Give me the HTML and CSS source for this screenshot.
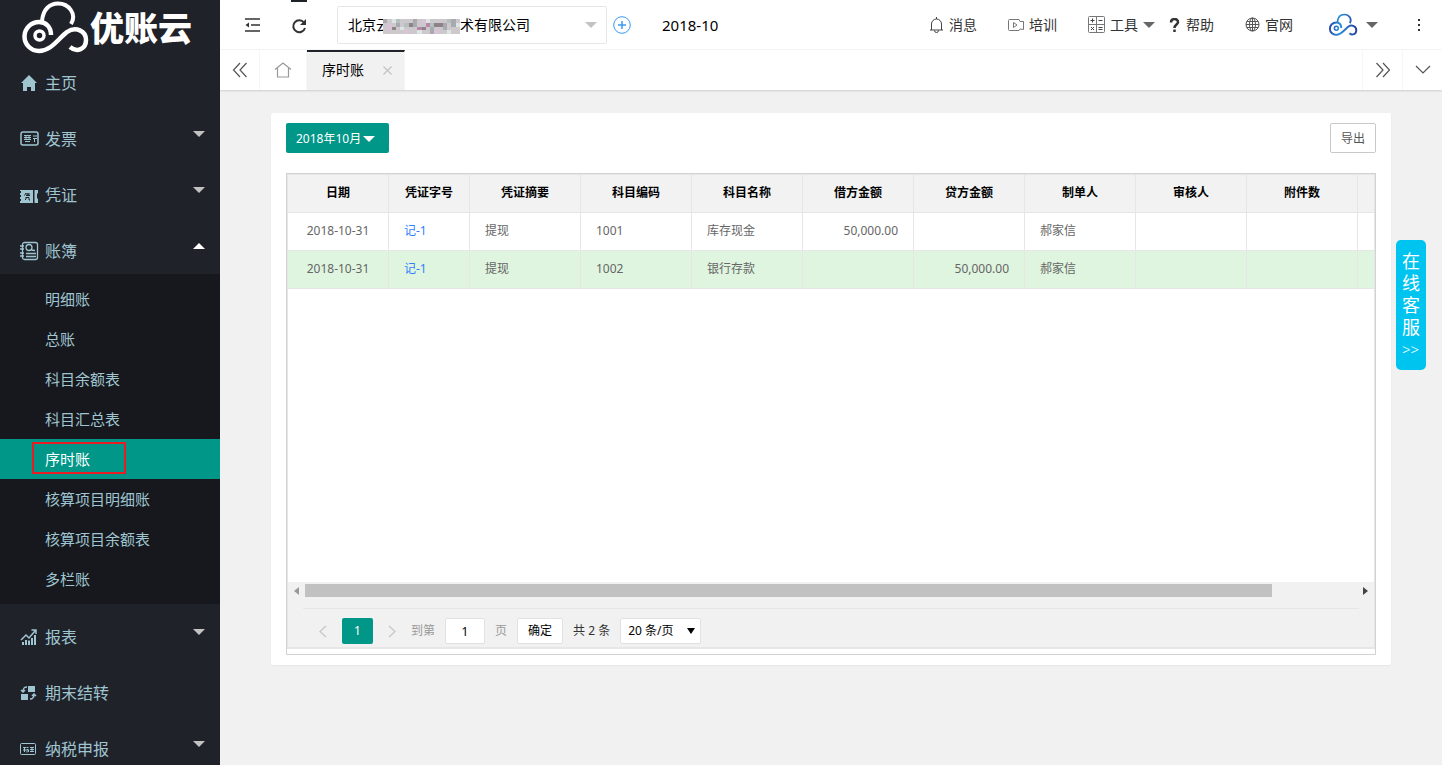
FILE: index.html
```
<!DOCTYPE html>
<html lang="zh-CN">
<head>
    <meta charset="UTF-8">
    <meta name="viewport" content="width=device-width, initial-scale=1.0">
    <title>优账云 - 序时账</title>
    <link rel="stylesheet" href="styles.css">
</head>
<body>

<svg class="symbols" aria-hidden="true">
    <symbol id="cloud" viewBox="20 0 70 56">
        <path d="M51 35C51 27 46 22 39 22A14.5 14.5 0 0 0 39 51C51 51 58 39 67 32C76 26 86 31 86 40C86 49 77 53 70 47" fill="none" stroke-width="4.5"/>
        <path d="M42 21C43 9 50 3.500 58 3.500C69 3.500 77 14 71 24" fill="none" stroke-width="4"/>
        <circle cx="39.5" cy="35.5" r="4.5" fill="none" stroke-width="3.5"/>
    </symbol>
</svg>

<aside class="sidebar">
    <a class="logo" href="#">
        <svg class="logo-mark" width="70" height="56"><use href="#cloud"/></svg>
        <span>优账云</span>
    </a>
    <ul class="menu">
        <li>
            <a href="#">
                <svg width="18" height="18" viewBox="0 0 18 18"><path d="M9 1L1 9h2v8h4v-4h4v4h4V9h2z" fill="currentColor"/></svg>
                主页
            </a>
        </li>
        <li>
            <a href="#">
                <svg width="20" height="18" viewBox="0 0 20 18" fill="none" stroke="currentColor"><rect x="1" y="2" width="17" height="13" rx="2" stroke-width="1.5"/><path d="M4 5.500h7M4 7.500h7M4 9.500h7M5 11.500h5M6 5v4M9 5v4M13 6h4M13 8.500h4M14.500 9v3"/></svg>
                发票
                <i class="caret"></i>
            </a>
        </li>
        <li>
            <a href="#">
                <svg width="20" height="18" viewBox="0 0 20 18"><path d="M0 4h13v13H0v-2h1v-2H0v-2h1V9H0V7h1V5H0zM14.500 4H18v3l-1 1v4l1 1v4h-3.500z" fill="currentColor"/><path d="M6 7L4.500 9.500M6 8h4M8 7v2.500M6 9.500h4M6 11v2l-1 1M6 11.500h3V14h1" stroke="#20222a" fill="none"/></svg>
                凭证
                <i class="caret"></i>
            </a>
        </li>
        <li>
            <a href="#">
                <svg width="20" height="20" viewBox="0 0 20 20" fill="none" stroke="currentColor" stroke-width="1.3"><rect x="2.5" y="1.5" width="15" height="17" rx="2"/><path d="M0 5h4M0 8h4M0 12h4M0 15h4M6 12.500h10M6 15.500h10M11 8.500c1 1 2 1 4 1"/><circle cx="9" cy="6.5" r="3"/></svg>
                账簿
                <i class="caret up"></i>
            </a>
            <ul class="submenu">
                <li><a href="#">明细账</a></li>
                <li><a href="#">总账</a></li>
                <li><a href="#">科目余额表</a></li>
                <li><a href="#">科目汇总表</a></li>
                <li class="active"><a href="#">序时账</a></li>
                <li><a href="#">核算项目明细账</a></li>
                <li><a href="#">核算项目余额表</a></li>
                <li><a href="#">多栏账</a></li>
            </ul>
        </li>
        <li>
            <a href="#">
                <svg width="18" height="18" viewBox="0 0 18 18" fill="currentColor"><path d="M2 14h2v3H2zM5 12h2v5H5zM8 12.500h2V17H8zM11 10h2v7h-2zM14 7h2v10h-2z"/><path d="M1 12l5-5 3 3 6-7M11.500 2H16v4" fill="none" stroke="currentColor" stroke-width="1.5"/></svg>
                报表
                <i class="caret"></i>
            </a>
        </li>
        <li>
            <a href="#">
                <svg width="18" height="18" viewBox="0 0 18 18" fill="currentColor"><path d="M8 2h7v6H8zM1 10h7v6H1z"/><path d="M7 3C4 3 3 4 3 8M1 6l2 2 2-2M10 15c3 0 4-1 4-5M12 12l2-2 2 2" fill="none" stroke="currentColor" stroke-width="1.5"/></svg>
                期末结转
            </a>
        </li>
        <li>
            <a href="#">
                <svg width="18" height="18" viewBox="0 0 18 18" fill="none" stroke="currentColor"><rect x="0.5" y="3.5" width="15" height="11" rx="1"/><path d="M3 7.500h3M4.500 7v5M3 10h3M6.500 7.500h2M6.500 9.500h2M7 10v2.500M8.500 10v2M10 7.500h4M10 9.500h4M10 11.500h4M12 7v4"/></svg>
                纳税申报
                <i class="caret"></i>
            </a>
        </li>
    </ul>
</aside>

<div class="main">
    <header class="header">
        <button class="icon-btn" aria-label="收起菜单">
            <svg width="16" height="14" viewBox="0 0 16 14" fill="none" stroke="#333" stroke-width="1.5"><path d="M0 1h15M6 7h9M0 13h15"/><path d="M4 4.500v5L.500 7z" fill="#333" stroke="none"/></svg>
        </button>
        <button class="icon-btn refresh" aria-label="刷新">
            <svg width="16" height="16" viewBox="0 0 16 16" fill="none" stroke="#333" stroke-width="2"><path d="M13 4.500A6 6 0 1 0 14 10"/><path d="M15 1v6H9z" fill="#333" stroke="none"/></svg>
        </button>
        <div class="company">
            <select aria-label="公司">
                <option>北京云　　　　　术有限公司</option>
            </select>
            <svg class="mosaic" width="77" height="15" viewBox="0 0 18 4" preserveAspectRatio="none" shape-rendering="crispEdges">
                <rect width="18" height="4" fill="#ccc8cc"/>
                <path d="M0 0h1v1H0zM3 1h1v1H3zM7 0h1v2H7zM11 2h1v2h-1zM14 1h1v2h-1zM16 0h1v2h-1z" fill="#a9a9b0"/>
                <path d="M1 1h1v2H1zM5 3h1v1H5zM9 0h1v1H9zM12 3h1v1h-1z" fill="#d9c3d6"/>
                <path d="M2 0h1v1H2zM4 2h1v1H4zM8 3h1v1H8zM10 0h1v1h-1zM15 3h1v1h-1zM17 1h1v1h-1z" fill="#d9e6e4"/>
                <path d="M2 2h1v1H2zM6 1h1v1H6zM9 2h1v1H9zM12 1h2v1h-2z" fill="#8e8289"/>
                <path d="M8 2h1v1H8zM10 1h1v1h-1z" fill="#b687ab"/>
                <path d="M3 0h1v1H3zM5 1h1v1H5zM11 1h1v1h-1zM15 0h1v1h-1z" fill="#b3c0bd"/>
            </svg>
            <i class="caret"></i>
        </div>
        <button class="add" aria-label="新增">
            <svg width="18" height="18" viewBox="0 0 18 18" fill="none" stroke="#3a9bf5"><circle cx="9" cy="9" r="8.3"/><path d="M5 9h8M9 5v8" stroke-width="1.5"/></svg>
        </button>
        <span class="period">2018-10</span>

        <nav class="links">
            <a href="#">
                <svg width="15" height="16" viewBox="0 0 15 16" fill="none" stroke="#444"><path d="M1 13h13M2.500 13V7a5 5 0 0 1 10 0v6M7.500 2V0M5.500 13.500a2 2 0 0 0 4 0"/></svg>
                消息
            </a>
            <a href="#">
                <svg width="16" height="14" viewBox="0 0 16 14" fill="none" stroke="#777"><path d="M1.500 1.500H11l1 2h3.500v8L12 11l-1 1.500H1.500a1 1 0 0 1-1-1v-9a1 1 0 0 1 1-1z"/><path d="M5.500 4.500v5L9 7z"/></svg>
                培训
            </a>
            <a href="#" class="tools">
                <svg width="17" height="17" viewBox="0 0 17 17" fill="none" stroke="#777"><rect x="0.5" y="0.5" width="16" height="16" rx="1"/><path d="M8.500 0v17M0 8.500h17"/><path d="M2.500 4.500h4M4.500 2.500v4M10.500 4.500h4M3 11l3 3M6 11l-3 3M10.500 11.500h4M10.500 13.500h4" stroke="#444"/></svg>
                工具
                <i class="caret"></i>
            </a>
            <a href="#">
                <svg width="12" height="14" viewBox="0 0 12 14" fill="none" stroke="#333" stroke-width="2.5"><path d="M2 4.500C2 0 9 0 9 4C9 6.500 5.500 6.500 5.500 10M5.500 11.500v2.500"/></svg>
                帮助
            </a>
            <a href="#">
                <svg width="15" height="15" viewBox="0 0 15 15" fill="none" stroke="#555"><circle cx="7.5" cy="7.5" r="6.5"/><ellipse cx="7.5" cy="7.5" rx="3" ry="6.5"/><path d="M7.500 1v13M1 7.500h13M2 4.500h11M2 10.500h11"/></svg>
                官网
            </a>
            <a href="#" class="user" aria-label="账户">
                <svg width="30" height="24">
                    <defs><linearGradient id="blue" gradientUnits="userSpaceOnUse" x1="20" y1="0" x2="88" y2="0"><stop offset="0" stop-color="#2a3f9d"/><stop offset="0.4" stop-color="#2590d8"/><stop offset="1" stop-color="#2a3f9d"/></linearGradient></defs>
                    <use href="#cloud"/>
                </svg>
                <i class="caret"></i>
            </a>
        </nav>
        <button class="more" aria-label="更多">
            <svg width="4" height="14" viewBox="0 0 4 14" fill="#333"><path d="M1 1h2v2H1zM1 6h2v2H1zM1 11h2v2H1z"/></svg>
        </button>
    </header>

    <div class="tabs">
        <button aria-label="向左">
            <svg width="16" height="16" viewBox="0 0 16 16"><path d="M8 1L1.500 8 8 15M14.500 1L8 8l6.500 7"/></svg>
        </button>
        <a class="tab home" href="#" aria-label="主页">
            <svg width="18" height="16" viewBox="0 0 18 16"><path d="M1 7.500L9 1l8 6.500M3.500 6v9h11V6"/></svg>
        </a>
        <a class="tab current" href="#">
            序时账
            <svg class="close" width="9" height="9" viewBox="0 0 9 9"><path d="M.500.500l8 8M8.500.500l-8 8"/></svg>
        </a>
        <button class="right" aria-label="向右">
            <svg width="16" height="16" viewBox="0 0 16 16"><path d="M1.500 1L8 8l-6.500 7M8 1l6.500 7L8 15"/></svg>
        </button>
        <button class="right" aria-label="展开">
            <svg width="16" height="10" viewBox="0 0 16 10"><path d="M1 1l7 7 7-7"/></svg>
        </button>
    </div>

    <section class="card">
        <div class="toolbar">
            <button class="month">2018年10月<i class="caret"></i></button>
            <button class="export">导出</button>
        </div>

        <div class="frame">
            <div class="grid">
                <div class="grid-body">
                    <table>
                        <colgroup>
                            <col class="col-date">
                            <col class="col-no">
                            <col class="col" span="8">
                            <col>
                        </colgroup>
                        <thead>
                            <tr>
                                <th>日期</th>
                                <th>凭证字号</th>
                                <th>凭证摘要</th>
                                <th>科目编码</th>
                                <th>科目名称</th>
                                <th>借方金额</th>
                                <th>贷方金额</th>
                                <th>制单人</th>
                                <th>审核人</th>
                                <th>附件数</th>
                                <th></th>
                            </tr>
                        </thead>
                        <tbody>
                            <tr>
                                <td class="date">2018-10-31</td>
                                <td><a href="#">记-1</a></td>
                                <td>提现</td>
                                <td>1001</td>
                                <td>库存现金</td>
                                <td class="money">50,000.00</td>
                                <td class="money"></td>
                                <td>郝家信</td>
                                <td></td>
                                <td></td>
                                <td></td>
                            </tr>
                            <tr class="hover">
                                <td class="date">2018-10-31</td>
                                <td><a href="#">记-1</a></td>
                                <td>提现</td>
                                <td>1002</td>
                                <td>银行存款</td>
                                <td class="money"></td>
                                <td class="money">50,000.00</td>
                                <td>郝家信</td>
                                <td></td>
                                <td></td>
                                <td></td>
                            </tr>
                        </tbody>
                    </table>
                </div>
                <div class="scrollbar">
                    <i class="arrow left"></i>
                    <div class="track"><div class="thumb"></div></div>
                    <i class="arrow"></i>
                </div>
                <div class="pager">
                    <button class="step" aria-label="上一页"><svg width="8" height="13" viewBox="0 0 8 13"><path d="M7 1L1 6.500 7 12"/></svg></button>
                    <button class="page">1</button>
                    <button class="step" aria-label="下一页"><svg width="8" height="13" viewBox="0 0 8 13"><path d="M1 1l6 5.500L1 12"/></svg></button>
                    <label for="page-no">到第</label>
                    <input type="text" id="page-no" value="1">
                    <label for="page-no">页</label>
                    <button class="go">确定</button>
                    <span>共 2 条</span>
                    <div class="size">
                        <select aria-label="每页条数">
                            <option>20 条/页</option>
                            <option>50 条/页</option>
                        </select>
                        <i class="caret"></i>
                    </div>
                </div>
            </div>
        </div>
    </section>
</div>

<a class="service" href="#">在线客服<span>&gt;&gt;</span></a>

</body>
</html>
```
FILE: styles.css
```
*, *::after {
    box-sizing: border-box;
}
body {
    margin: 0;
    display: flex;
    height: 100vh;
    overflow: hidden;
    background-color: #f1f1f1;
    color: #333;
    font: 14px/20px "Noto Sans", "Noto Sans CJK SC", sans-serif;
}
ul {
    list-style: none;
    margin: 0;
    padding: 0;
}
a {
    color: inherit;
    text-decoration: none;
}
button, input, select {
    font: inherit;
    color: inherit;
    margin: 0;
    padding: 0;
    border: none;
    background: none;
    cursor: pointer;
}
svg {
    display: block;
    flex: none;
}
.symbols {
    position: absolute;
    width: 0;
    height: 0;
}
.caret {
    flex: none;
    border: 6px solid transparent;
    border-top-color: #666;
    border-bottom: none;
}

/* sidebar */
.sidebar {
    flex: none;
    width: 220px;
    overflow: hidden;
    background-color: #20222a;
    color: #9fc5d1;
}
.logo {
    display: flex;
    align-items: center;
    height: 50px;
    padding: 6px 0 0 20px;
    color: #fff;
    font-size: 34px;
    line-height: 50px;
    font-weight: 900;
}
.logo-mark {
    stroke: #fff;
}
.menu {
    padding-top: 5px;
}
.menu > li {
    padding: 5px 0;
}
.menu > li > a {
    display: grid;
    grid-template-columns: 25px 1fr 12px;
    align-items: center;
    height: 46px;
    padding: 0 15px 0 20px;
    font-size: 16px;
}
.menu .caret {
    border-top-color: #c2c2c2;
    margin-bottom: 10px;
}
.menu .caret.up {
    border-top: none;
    border-bottom: 6px solid #fff;
}
.submenu {
    padding: 5px 0;
    background-color: #17181d;
    font-size: 15px;
}
.submenu a {
    display: block;
    padding-left: 45px;
    line-height: 40px;
}
.submenu .active {
    position: relative;
    background-color: #009688;
    color: #fff;
}
.submenu .active::after {
    content: "";
    position: absolute;
    left: 32px;
    top: 3px;
    width: 94px;
    height: 32px;
    border: 2px solid #e81c23;
}

/* header */
.main {
    flex: 1;
    min-width: 0;
}
.header {
    display: flex;
    align-items: center;
    height: 50px;
    padding: 0 21px 0 25px;
    background-color: #fff;
    border-bottom: 1px solid #f6f6f6;
}
.icon-btn {
    display: flex;
    align-items: center;
    justify-content: center;
    width: 16px;
    height: 50px;
}
.refresh {
    margin-left: 30px;
    border-top: 2px solid #20222a;
}
.company {
    position: relative;
    width: 270px;
    margin-left: 30px;
}
.company select {
    display: block;
    appearance: none;
    width: 100%;
    height: 38px;
    padding-left: 10px;
    border: 1px solid #e6e6e6;
    border-radius: 2px;
    background-color: #fff;
    color: #000;
}
.mosaic {
    position: absolute;
    left: 46px;
    top: 13px;
}
.company .caret {
    position: absolute;
    right: 10px;
    top: 16px;
    border-top-color: #c2c2c2;
}
.add {
    margin-left: 6px;
}
.period {
    margin-left: 31px;
    font-size: 15px;
    color: #000;
}
.links {
    display: flex;
    align-items: center;
    margin-left: auto;
}
.links a {
    display: flex;
    align-items: center;
    gap: 5px;
    margin-right: 31px;
}
.links .tools {
    margin-right: 14px;
}
.links .user {
    gap: 8px;
    margin-left: 4px;
    margin-right: 39px;
    stroke: url(#blue);
}

/* tabs */
.tabs {
    display: flex;
    height: 40px;
    background-color: #fff;
    box-shadow: 0 1px 2px rgba(0, 0, 0, 0.15);
}
.tabs svg {
    fill: none;
    stroke: #555;
    stroke-width: 1.2;
}
.tabs button {
    display: flex;
    align-items: center;
    justify-content: center;
    width: 40px;
    border-right: 1px solid #f6f6f6;
}
.tabs .right {
    border-right: none;
    border-left: 1px solid #f6f6f6;
}
.tab {
    display: flex;
    align-items: center;
    padding: 0 14px;
    border-right: 1px solid #f6f6f6;
    color: #000;
}
.tab.current {
    gap: 19px;
    padding: 0 12px 2px 15px;
    margin-right: auto;
    background-color: #f1f1f1;
    border-top: 2px solid #20222a;
}
.tabs .home svg {
    stroke: #999;
}
.tabs .close {
    stroke: #c2c2c2;
}

/* content card */
.card {
    margin: 23px 51px;
    padding: 10px 15px;
    background-color: #fff;
    border-radius: 2px;
    box-shadow: 0 1px 2px rgba(0, 0, 0, 0.05);
    font-size: 12px;
}
.toolbar {
    display: flex;
    justify-content: space-between;
    margin-bottom: 20px;
}
.toolbar button {
    height: 30px;
    padding: 2px 10px 0;
    border-radius: 2px;
}
.month {
    display: flex;
    align-items: center;
    gap: 2px;
    width: 103px;
    background-color: #009688;
    color: #fff;
}
.month .caret {
    border-top-color: #fff;
}
.export {
    border: 1px solid #c9c9c9;
    color: #555;
}
.frame {
    padding-bottom: 5px;
    border: 1px solid #d2d2d2;
}
.grid {
    border: solid #e6e6e6;
    border-width: 1px 1px 2px;
    background-color: #f1f1f1;
}
.grid-body {
    min-height: 407px;
    overflow: hidden;
    background-color: #fff;
}
table {
    width: 100%;
    table-layout: fixed;
    border-collapse: separate;
    border-spacing: 0;
}
.col-date {
    width: 101px;
}
.col-no {
    width: 81px;
}
.col {
    width: 111px;
}
th, td {
    height: 38px;
    padding: 0 15px 1px;
    border: solid #e6e6e6;
    border-width: 0 1px 1px 0;
    white-space: nowrap;
}
th {
    background-color: #f2f2f2;
    color: #000;
}
td {
    color: #666;
}
th:last-child, td:last-child {
    padding: 0;
    border-right: none;
}
.date {
    text-align: center;
}
.money {
    text-align: right;
}
td a {
    color: #2f80ff;
}
.hover td {
    background-color: #dff5df;
}

/* scrollbar and pager */
.scrollbar {
    display: flex;
    align-items: center;
    height: 17px;
    padding: 0 6px;
}
.track {
    flex: 1;
    margin: 0 7px 0 6px;
}
.thumb {
    width: 92%;
    height: 13px;
    background-color: #c1c1c1;
}
.arrow {
    border: 4px solid transparent;
    border-left: 5px solid #444;
    border-right: none;
}
.arrow.left {
    border-left: none;
    border-right: 5px solid #999;
}
.pager {
    display: flex;
    align-items: center;
    margin: 9px 15px 0;
    padding: 9px 16px 3px;
    border-top: 1px solid #e6e6e6;
}
.pager svg {
    fill: none;
    stroke: #c9c9c9;
    stroke-width: 1.5;
}
.pager button, .pager input, .pager select {
    height: 26px;
    border-radius: 2px;
}
.pager .page {
    width: 31px;
    margin: 0 15px;
    background-color: #009688;
    color: #fff;
}
.pager label {
    margin: 0 10px;
    color: #999;
}
.pager .step + label {
    margin-left: 15px;
}
.pager input, .pager .go, .pager select {
    border: 1px solid #e2e2e2;
    background-color: #fff;
    color: #000;
}
.pager input {
    width: 40px;
    text-align: center;
}
.pager .go {
    width: 46px;
    margin-right: 10px;
}
.size {
    position: relative;
    margin-left: 10px;
}
.size select {
    display: block;
    appearance: none;
    width: 81px;
    padding-left: 7px;
}
.size .caret {
    position: absolute;
    right: 6px;
    top: 10px;
    border-width: 6px 4px 0;
    border-top-color: #000;
}

/* floating service tab */
.service {
    position: fixed;
    right: 16px;
    top: 240px;
    width: 30px;
    height: 130px;
    padding: 10px 6px;
    border-radius: 5px;
    background-color: #00c4f0;
    color: #fff;
    font-size: 18px;
    line-height: 22px;
    word-break: break-all;
}
.service span {
    display: block;
    font-size: 15px;
    font-weight: 300;
    white-space: nowrap;
}
```
